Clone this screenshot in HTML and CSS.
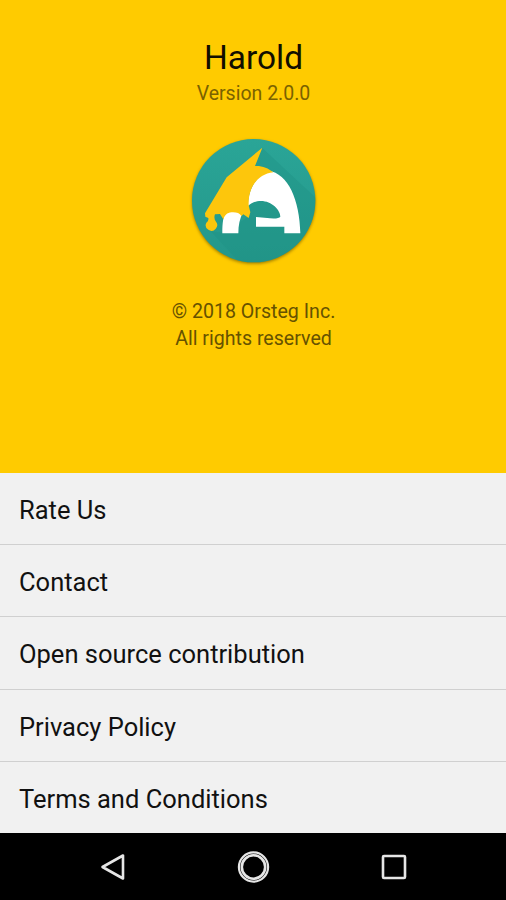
FILE: index.html
```html
<!DOCTYPE html>
<html lang="en">
<head>
  <meta charset="UTF-8" />
  <meta name="viewport" content="width=device-width, initial-scale=1.0" />
  <title>Harold</title>
  <link rel="stylesheet" href="styles.css">
</head>
<body>
  <header class="about">
    <h1>Harold</h1>
    <p class="version">Version 2.0.0</p>
    <svg class="logo" viewBox="0 0 438 420">
      <defs>
        <linearGradient id="teal" x1="0" y1="0" x2="0" y2="1">
          <stop offset="0" stop-color="#2aa597" />
          <stop offset="1" stop-color="#24978a" />
        </linearGradient>
        <clipPath id="disc"><circle cx="221" cy="212" r="185" /></clipPath>
      </defs>
      <circle class="logo-disc" cx="221" cy="212" r="185" fill="url(#teal)" />
      <!-- long shadow -->
      <path clip-path="url(#disc)" fill="#1f9184" opacity=".4" d="M247 54 L420 215 L400 420 L200 420 L92 304 L130 308 L205 260 L225 108 Z" />
      <!-- letter -->
      <path fill="#fff" d="M127 310 C127 280 129 258 140 240 L190 245 C179 265 175 286 175 310 Z" />
      <path fill="#fff" d="M204 228 C204 185 222 143 265 122 C325 130 359 210 361 310 H313 V290 H228 V261 L270 265 Q296 267 301 260 C301 240 275 213 243 213 C226 213 214 219 204 228 Z" />
      <!-- hat -->
      <path fill="#fdc60c" d="M247 53 L225 108 C247 107 264 114 280 127 C231 133 204 174 206 226 L211 247 L206 264 L190 253 L184 258 C179 250 171 247 159 247 C146 247 136 251 130 268 L120 252 L105 253 C102 260 103 268 107 274 A17 17 0 1 1 79 278 C84 274 86 270 85 264 L76 260 L75 250 L140 142 Z" />
    </svg>
    <p class="copyright">&copy; 2018 Orsteg Inc.<br>All rights reserved</p>
  </header>

  <ul class="menu">
    <li>Rate Us</li>
    <li>Contact</li>
    <li>Open source contribution</li>
    <li>Privacy Policy</li>
    <li>Terms and Conditions</li>
  </ul>

  <nav class="navbar">
    <svg viewBox="0 0 36 36"><path d="M28 6.5 V29.5 L7.5 18 Z" /></svg>
    <svg viewBox="0 0 36 36">
      <circle class="ring" cx="17.5" cy="18" r="14.6" />
      <circle cx="17.5" cy="18" r="11.7" />
    </svg>
    <svg viewBox="0 0 36 36"><rect x="7" y="7" width="22" height="22" rx="1" /></svg>
  </nav>
</body>
</html>
```

FILE: styles.css
```css
* { box-sizing: border-box; }
body { font-family: Roboto, sans-serif; background: #000; margin: 0; height: 900px; display: flex; flex-direction: column; overflow: hidden; }
.about { background: #ffcb00; height: 472.5px; padding: 38px 0 0 1px; display: flex; flex-direction: column; align-items: center; text-align: center; }
h1 { margin: 0; font-size: 33.4px; font-weight: 400; line-height: 40px; color: #110e00; }
.version { margin: 4px 0 0; font-size: 19.5px; line-height: 24px; color: #7a6200; }
.logo { width: 146px; height: 140px; margin: 24px 1px 0 0; }
.logo-disc { filter: drop-shadow(0 4px 4px rgba(90, 70, 0, 0.6)); }
.copyright { margin: 28px 0 0; font-size: 19.6px; line-height: 27px; color: #665200; }
.menu { list-style: none; margin: 0; padding: 0; background: #f1f1f1; height: 360.8px; }
.menu li { height: 72.4px; padding: 3px 19px 0; border-bottom: 1px solid #d0d0d0; display: flex; align-items: center; font-size: 25.5px; color: #111; }
.menu li:last-child { height: 71.2px; border-bottom: 0; }
.navbar { flex: 1; display: flex; justify-content: space-between; align-items: center; padding: 0 94px 0 95px; }
.navbar svg { width: 36px; height: 36px; fill: none; stroke: #e6e6e6; stroke-width: 2.6; stroke-linejoin: round; }
.navbar .ring { stroke-width: 2.2; }
```
